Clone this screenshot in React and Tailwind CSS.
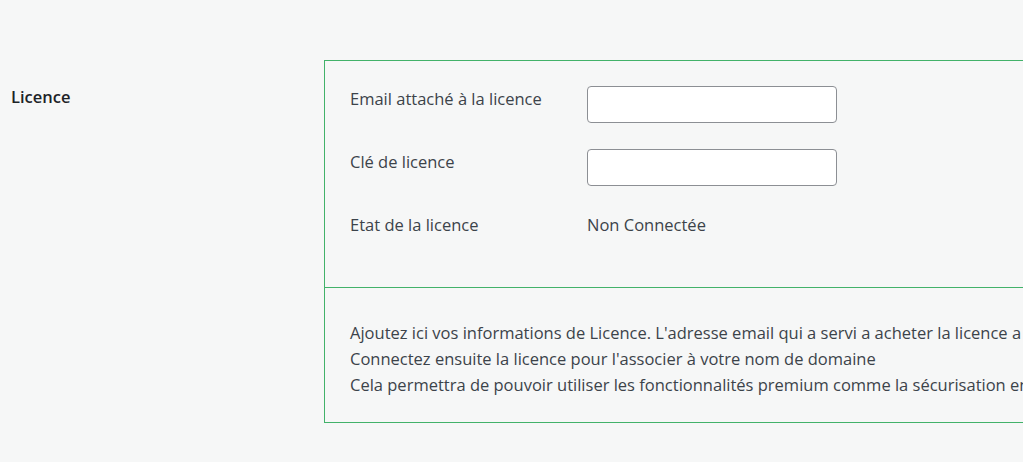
const font = { fontFamily: '"Open Sans", "Noto Sans", sans-serif' };

const Field = ({ label, children }) => (
  <div className="flex items-start">
    <div className="w-[237px] shrink-0 leading-[26px]">{label}</div>
    {children}
  </div>
);

const TextInput = () => (
  <input
    type="text"
    className="h-[37px] w-[250px] rounded-[4px] border border-[#8c8f94] bg-white px-2 outline-none"
  />
);

export default function App() {
  return (
    <div
      className="h-[462px] w-[1023px] overflow-hidden bg-[#f6f7f7] text-[16.5px] text-[#3c434a]"
      style={font}
    >
      <div className="flex items-start pt-[60px]">
        {/* libellé de la section */}
        <div className="w-[324px] shrink-0 pl-[11px] pt-[24px] font-semibold leading-[26px] text-[#1d2327]">
          Licence
        </div>

        <div className="w-[1100px] shrink-0 border border-[#42b26a]">
          <div className="flex flex-col gap-[26px] pb-[49px] pl-[25px] pt-[25px]">
            <Field label="Email attaché à la licence">
              <TextInput />
            </Field>
            <Field label="Clé de licence">
              <TextInput />
            </Field>
            <Field label="Etat de la licence">
              <span className="leading-[26px]">Non Connectée</span>
            </Field>
          </div>

          <div className="border-t border-[#42b26a] pb-[24px] pl-[25px] pt-[32px] leading-[26px] whitespace-nowrap">
            <div>
              Ajoutez ici vos informations de Licence. L'adresse email qui a servi a acheter la licence a été utilisée lors de votre commande.
            </div>
            <div>Connectez ensuite la licence pour l'associer à votre nom de domaine</div>
            <div>
              Cela permettra de pouvoir utiliser les fonctionnalités premium comme la sécurisation en deux étapes.
            </div>
          </div>
        </div>
      </div>
    </div>
  );
}
